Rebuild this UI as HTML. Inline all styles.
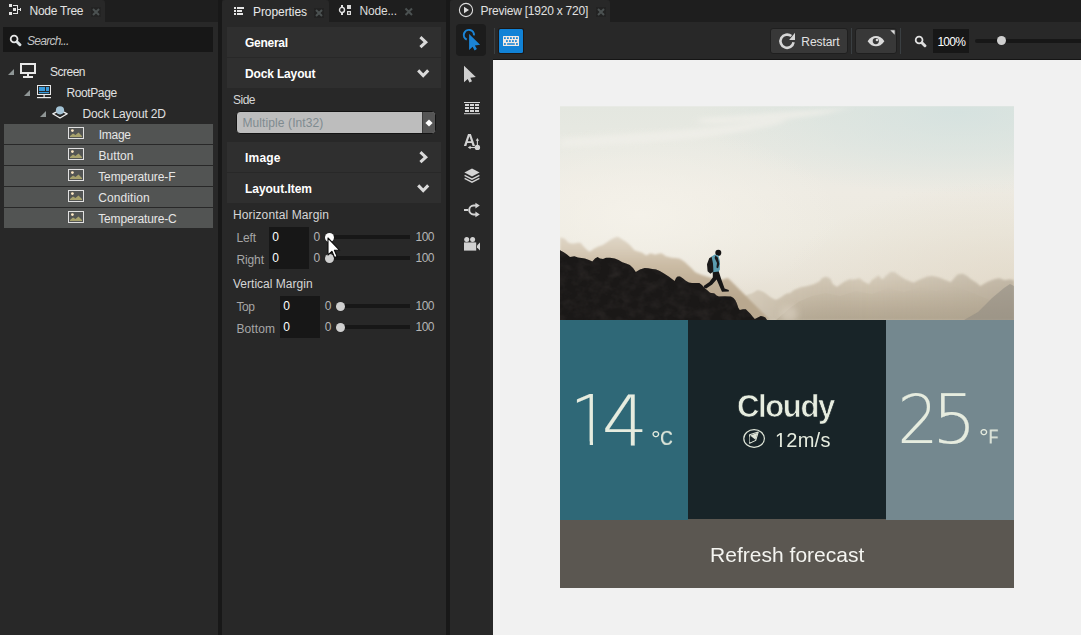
<!DOCTYPE html>
<html lang="en">
<head>
<meta charset="utf-8">
<title>Kanzi Studio - Dock Layout</title>
<style>
html,body{margin:0;padding:0;}
html{background:#282828;}
body{width:1081px;height:635px;overflow:hidden;background:#282828;font-family:"Liberation Sans",sans-serif;position:relative;}
.t{position:absolute;white-space:nowrap;margin:0;padding:0;font-weight:400;}
.g{display:inline-block;width:0;vertical-align:top;white-space:nowrap;}
section,header,nav,main,ul,li,div,h1,h3{margin:0;padding:0;}
ul{list-style:none;}
</style>
</head>
<body>
<div style="position:absolute;left:0px;top:0px;width:1081px;height:22px;background:#1e1e1e;"></div>
<div style="position:absolute;left:218px;top:0px;width:4px;height:635px;background:#181818;"></div>
<div style="position:absolute;left:446px;top:0px;width:4px;height:635px;background:#181818;"></div>
<section id="node-tree">
<div style="position:absolute;left:0px;top:0px;width:105px;height:22px;background:#282828;border-radius:0 3px 0 0;"></div>
<svg style="position:absolute;left:8px;top:3px;" width="14" height="13" viewBox="0 0 14 13"><g fill="#e4e4e4"><rect x="1" y="1" width="3" height="3"/><rect x="5" y="5" width="3" height="3"/><rect x="1" y="9" width="3" height="3"/><path d="M5 2h5v4h2V5h1v3h-1V7h-2v4H5v-1h4V3H5z"/></g></svg>
<span class="t" style="left:29.50px;top:3px;font-size:12px;line-height:16px;color:#e2e2e2;letter-spacing:-0.254px;">Node Tree</span>
<div style="position:absolute;left:91px;top:7px;width:10px;height:10px;background:#232323;"></div>
<svg style="position:absolute;left:91px;top:7px;" width="10" height="10" viewBox="0 0 10 10"><path d="M2 2l6 6M8 2l-6 6" stroke="#4b5151" stroke-width="2" fill="none"/></svg>
<div style="position:absolute;left:3px;top:27px;width:210px;height:25px;background:#171717;"></div>
<svg style="position:absolute;left:9px;top:34px;" width="13" height="13" viewBox="0 0 13 13"><circle cx="5.1" cy="5" r="3.4" fill="none" stroke="#e8e8e8" stroke-width="1.8"/><path d="M7.9 7.7l3 3" stroke="#dce2e4" stroke-width="3" stroke-linecap="round"/></svg>
<span class="t" style="left:27.00px;top:33px;font-size:12px;line-height:16px;color:#c4c4c4;letter-spacing:-0.716px;font-style:italic;">Search...</span>
<ul class="tree">
<li><svg style="position:absolute;left:8.2px;top:69px;" width="6" height="6" viewBox="0 0 6 6"><path d="M6 0v6H0z" fill="#8f9696"/></svg><svg style="position:absolute;left:20px;top:62.5px;" width="16" height="16" viewBox="0 0 16 16"><g fill="none" stroke="#e8e8e8"><rect x="1" y="1" width="14" height="9" stroke-width="2"/></g><rect x="7" y="11" width="2" height="2" fill="#e8e8e8"/><rect x="3" y="13" width="10" height="2" fill="#e8e8e8"/></svg><span class="t" style="left:50.00px;top:64px;font-size:12px;line-height:16px;color:#e0e0e0;letter-spacing:-0.505px;">Screen</span></li>
<li><svg style="position:absolute;left:24.2px;top:90px;" width="6" height="6" viewBox="0 0 6 6"><path d="M6 0v6H0z" fill="#8f9696"/></svg><svg style="position:absolute;left:37px;top:84.7px;" width="14" height="14" viewBox="0 0 14 14"><rect x="0.5" y="0.5" width="13" height="9" fill="none" stroke="#eaeaea" stroke-width="1"/><rect x="2" y="2" width="6" height="4" fill="#3a9bdc"/><rect x="9" y="2" width="3" height="4" fill="#3a9bdc"/><rect x="2" y="7" width="10" height="1.2" fill="#3a9bdc"/><rect x="6.5" y="10" width="1.2" height="2.2" fill="#eaeaea"/><rect x="0" y="12" width="14" height="1.2" fill="#eaeaea"/></svg><span class="t" style="left:66.50px;top:85px;font-size:12px;line-height:16px;color:#e0e0e0;letter-spacing:-0.396px;">RootPage</span></li>
<li><svg style="position:absolute;left:40.4px;top:111px;" width="6" height="6" viewBox="0 0 6 6"><path d="M6 0v6H0z" fill="#8f9696"/></svg><svg style="position:absolute;left:52px;top:106px;" width="16" height="13" viewBox="0 0 16 13"><path d="M0.8 7.8L8 4.2l7.2 3.6L8 12z" fill="none" stroke="#f0f0f0" stroke-width="1.3" stroke-linejoin="round"/><circle cx="8" cy="4.3" r="4.1" fill="#a3c3d6"/></svg><span class="t" style="left:82.50px;top:106px;font-size:12px;line-height:16px;color:#e0e0e0;letter-spacing:-0.144px;">Dock Layout 2D</span></li>
<li><div style="position:absolute;left:4px;top:124px;width:209px;height:20px;background:#525453;"></div><svg style="position:absolute;left:68px;top:127px;" width="16" height="12" viewBox="0 0 16 12"><rect x="0.5" y="0.5" width="15" height="11" fill="none" stroke="#e0e0e0" stroke-width="1"/><circle cx="4.4" cy="3.6" r="1.4" fill="#ffe9c4"/><path d="M2 10V9l3-2.5 2.5 1.5 3-2.6L14 9v1z" fill="#a7a16c"/></svg><span class="t" style="left:98.70px;top:127px;font-size:12px;line-height:16px;color:#e6e6e6;letter-spacing:-0.263px;">Image</span></li>
<li><div style="position:absolute;left:4px;top:145px;width:209px;height:20px;background:#525453;"></div><svg style="position:absolute;left:68px;top:148px;" width="16" height="12" viewBox="0 0 16 12"><rect x="0.5" y="0.5" width="15" height="11" fill="none" stroke="#e0e0e0" stroke-width="1"/><circle cx="4.4" cy="3.6" r="1.4" fill="#ffe9c4"/><path d="M2 10V9l3-2.5 2.5 1.5 3-2.6L14 9v1z" fill="#a7a16c"/></svg><span class="t" style="left:98.50px;top:148px;font-size:12px;line-height:16px;color:#e6e6e6;letter-spacing:0.061px;">Button</span></li>
<li><div style="position:absolute;left:4px;top:166px;width:209px;height:20px;background:#525453;"></div><svg style="position:absolute;left:68px;top:169px;" width="16" height="12" viewBox="0 0 16 12"><rect x="0.5" y="0.5" width="15" height="11" fill="none" stroke="#e0e0e0" stroke-width="1"/><circle cx="4.4" cy="3.6" r="1.4" fill="#ffe9c4"/><path d="M2 10V9l3-2.5 2.5 1.5 3-2.6L14 9v1z" fill="#a7a16c"/></svg><span class="t" style="left:98.20px;top:169px;font-size:12px;line-height:16px;color:#e6e6e6;letter-spacing:-0.116px;">Temperature-F</span></li>
<li><div style="position:absolute;left:4px;top:187px;width:209px;height:20px;background:#525453;"></div><svg style="position:absolute;left:68px;top:190px;" width="16" height="12" viewBox="0 0 16 12"><rect x="0.5" y="0.5" width="15" height="11" fill="none" stroke="#e0e0e0" stroke-width="1"/><circle cx="4.4" cy="3.6" r="1.4" fill="#ffe9c4"/><path d="M2 10V9l3-2.5 2.5 1.5 3-2.6L14 9v1z" fill="#a7a16c"/></svg><span class="t" style="left:98.20px;top:190px;font-size:12px;line-height:16px;color:#e6e6e6;letter-spacing:0.112px;">Condition</span></li>
<li><div style="position:absolute;left:4px;top:208px;width:209px;height:20px;background:#525453;"></div><svg style="position:absolute;left:68px;top:211px;" width="16" height="12" viewBox="0 0 16 12"><rect x="0.5" y="0.5" width="15" height="11" fill="none" stroke="#e0e0e0" stroke-width="1"/><circle cx="4.4" cy="3.6" r="1.4" fill="#ffe9c4"/><path d="M2 10V9l3-2.5 2.5 1.5 3-2.6L14 9v1z" fill="#a7a16c"/></svg><span class="t" style="left:98.20px;top:211px;font-size:12px;line-height:16px;color:#e6e6e6;letter-spacing:-0.119px;">Temperature-C</span></li>
</ul>
</section>
<section id="properties">
<div style="position:absolute;left:222px;top:0px;width:107px;height:22px;background:#282828;border-radius:3px 3px 0 0;"></div>
<svg style="position:absolute;left:234px;top:7px;" width="10" height="8" viewBox="0 0 10 8"><g fill="#e6e6e6"><rect x="0" y="0" width="2" height="2"/><rect x="3" y="0" width="7" height="2"/><rect x="0" y="3" width="2" height="2"/><rect x="3" y="3" width="5" height="2"/><rect x="0" y="6" width="2" height="2"/><rect x="3" y="6" width="6" height="2"/></g></svg>
<span class="t" style="left:253.00px;top:4px;font-size:12px;line-height:16px;color:#e8e8e8;letter-spacing:-0.077px;">Properties</span>
<div style="position:absolute;left:314px;top:8px;width:10px;height:10px;background:#222;"></div>
<svg style="position:absolute;left:314px;top:8px;" width="10" height="10" viewBox="0 0 10 10"><path d="M2 2l6 6M8 2l-6 6" stroke="#4b5151" stroke-width="2" fill="none"/></svg>
<svg style="position:absolute;left:338px;top:4px;" width="14" height="12" viewBox="0 0 14 12"><g fill="none" stroke="#e2e2e2"><circle cx="4" cy="5.9" r="2.5" stroke-width="1.4"/></g><rect x="3" y="1" width="2" height="2.4" fill="#e2e2e2"/><rect x="3" y="8.4" width="2" height="2.6" fill="#e2e2e2"/><rect x="9" y="1" width="4" height="4" fill="#d8d8d8"/><rect x="9.6" y="7.6" width="2.8" height="2.8" fill="none" stroke="#dedede" stroke-width="1.2"/></svg>
<span class="t" style="left:359.50px;top:3px;font-size:12px;line-height:16px;color:#dcdcdc;letter-spacing:-0.198px;">Node...</span>
<svg style="position:absolute;left:404px;top:7.4px;" width="10" height="10" viewBox="0 0 10 10"><path d="M1.5 1.5l6.5 6.5M8 1.5l-6.5 6.5" stroke="#4b5151" stroke-width="2.1" fill="none"/></svg>
<header><div style="position:absolute;left:227px;top:27px;width:214px;height:30px;background:#2f2f2f;"></div><h3 class="t" style="left:245.00px;top:35px;font-size:12px;line-height:16px;color:#ffffff;letter-spacing:-0.282px;font-weight:700;">General</h3><svg style="position:absolute;left:418.6px;top:36.2px;" width="9" height="13" viewBox="0 0 9 13"><path d="M1.4 1.2L6.8 6.2l-5.4 5" fill="none" stroke="#dadada" stroke-width="3"/></svg></header>
<header><div style="position:absolute;left:227px;top:58px;width:214px;height:30px;background:#2f2f2f;"></div><h3 class="t" style="left:245.00px;top:66px;font-size:12px;line-height:16px;color:#ffffff;letter-spacing:-0.151px;font-weight:700;">Dock Layout</h3><svg style="position:absolute;left:417px;top:68.6px;" width="13" height="9" viewBox="0 0 13 9"><path d="M1.2 1.4L6.2 6.6l5-5.2" fill="none" stroke="#dadada" stroke-width="3"/></svg></header>
<label class="t" style="left:233.00px;top:92px;font-size:12px;line-height:16px;color:#d6d6d6;letter-spacing:-0.506px;">Side</label>
<div style="position:absolute;left:236px;top:111px;width:200px;height:23px;background:#bdbdbd;border:1px solid #141414;border-radius:4px;box-sizing:border-box;overflow:hidden;"><div style="position:absolute;right:0;top:0;width:12px;height:21px;background:#555;border-left:1px solid #3c3c3c;"></div></div>
<svg style="position:absolute;left:424.2px;top:118.4px;" width="10" height="10" viewBox="0 0 10 10"><path d="M5 1.4L8.6 5 5 8.6 1.4 5z" fill="#fff"/></svg>
<span class="t" style="left:242.50px;top:115px;font-size:12px;line-height:16px;color:#7f8b90;letter-spacing:0.095px;">Multiple (Int32)</span>
<header><div style="position:absolute;left:227px;top:142px;width:214px;height:30px;background:#2f2f2f;"></div><h3 class="t" style="left:245.00px;top:150px;font-size:12px;line-height:16px;color:#ffffff;letter-spacing:0.205px;font-weight:700;">Image</h3><svg style="position:absolute;left:418.6px;top:151.2px;" width="9" height="13" viewBox="0 0 9 13"><path d="M1.4 1.2L6.8 6.2l-5.4 5" fill="none" stroke="#dadada" stroke-width="3"/></svg></header>
<header><div style="position:absolute;left:227px;top:173px;width:214px;height:30px;background:#2f2f2f;"></div><h3 class="t" style="left:245.00px;top:181px;font-size:12px;line-height:16px;color:#ffffff;letter-spacing:-0.034px;font-weight:700;">Layout.Item</h3><svg style="position:absolute;left:417px;top:183.6px;" width="13" height="9" viewBox="0 0 13 9"><path d="M1.2 1.4L6.2 6.6l5-5.2" fill="none" stroke="#dadada" stroke-width="3"/></svg></header>
<label class="t" style="left:233.00px;top:207px;font-size:12px;line-height:16px;color:#d6d6d6;letter-spacing:0.122px;">Horizontal Margin</label>
<div style="position:absolute;left:269px;top:227px;width:40px;height:42px;background:#171717;"></div>
<div class="prop"><label class="t" style="left:236.50px;top:230px;font-size:12px;line-height:16px;color:#a6a6a6;letter-spacing:-0.172px;">Left</label><span class="t" style="left:272.20px;top:229px;font-size:12px;line-height:16px;color:#ffffff;">0</span><span class="t" style="left:313.60px;top:229px;font-size:12px;line-height:16px;color:#b4b4b4;">0</span><div style="position:absolute;left:330px;top:235px;width:80px;height:4px;background:#171717;"></div><span class="t" style="left:415.60px;top:229px;font-size:12px;line-height:16px;color:#b4b4b4;letter-spacing:-0.611px;">100</span></div>
<div class="prop"><label class="t" style="left:236.50px;top:252px;font-size:12px;line-height:16px;color:#a6a6a6;letter-spacing:-0.129px;">Right</label><span class="t" style="left:272.20px;top:250px;font-size:12px;line-height:16px;color:#ffffff;">0</span><span class="t" style="left:313.60px;top:250px;font-size:12px;line-height:16px;color:#b4b4b4;">0</span><div style="position:absolute;left:330px;top:256px;width:80px;height:4px;background:#171717;"></div><span class="t" style="left:415.60px;top:250px;font-size:12px;line-height:16px;color:#b4b4b4;letter-spacing:-0.611px;">100</span></div>
<label class="t" style="left:233.00px;top:276px;font-size:12px;line-height:16px;color:#d6d6d6;letter-spacing:0.017px;">Vertical Margin</label>
<div style="position:absolute;left:280px;top:296px;width:40px;height:42px;background:#171717;"></div>
<div class="prop"><label class="t" style="left:236.50px;top:299px;font-size:12px;line-height:16px;color:#a6a6a6;letter-spacing:-0.424px;">Top</label><span class="t" style="left:283.20px;top:298px;font-size:12px;line-height:16px;color:#ffffff;">0</span><span class="t" style="left:324.70px;top:298px;font-size:12px;line-height:16px;color:#b4b4b4;">0</span><div style="position:absolute;left:341px;top:304px;width:69px;height:4px;background:#171717;"></div><span class="t" style="left:415.60px;top:298px;font-size:12px;line-height:16px;color:#b4b4b4;letter-spacing:-0.611px;">100</span></div>
<div class="prop"><label class="t" style="left:236.50px;top:321px;font-size:12px;line-height:16px;color:#a6a6a6;letter-spacing:0.097px;">Bottom</label><span class="t" style="left:283.20px;top:319px;font-size:12px;line-height:16px;color:#ffffff;">0</span><span class="t" style="left:324.70px;top:319px;font-size:12px;line-height:16px;color:#b4b4b4;">0</span><div style="position:absolute;left:341px;top:325px;width:69px;height:4px;background:#171717;"></div><span class="t" style="left:415.60px;top:319px;font-size:12px;line-height:16px;color:#b4b4b4;letter-spacing:-0.611px;">100</span></div>
<div style="position:absolute;left:324.8px;top:232.60000000000002px;width:9.4px;height:9.4px;background:#fcfcfc;border-radius:50%;"></div>
<div style="position:absolute;left:324.8px;top:253.7px;width:9.4px;height:9.4px;background:#cfcfcf;border-radius:50%;"></div>
<div style="position:absolute;left:335.8px;top:301.7px;width:9.4px;height:9.4px;background:#cfcfcf;border-radius:50%;"></div>
<div style="position:absolute;left:335.8px;top:322.7px;width:9.4px;height:9.4px;background:#cfcfcf;border-radius:50%;"></div>
</section>
<section id="preview">
<div style="position:absolute;left:450px;top:0px;width:160px;height:22px;background:#282828;border-radius:3px 3px 0 0;"></div>
<svg style="position:absolute;left:458px;top:2px;" width="16" height="16" viewBox="0 0 16 16"><circle cx="8" cy="8" r="6.6" fill="none" stroke="#dcdcdc" stroke-width="1.1"/><path d="M6 4.8L11 8l-5 3.2z" fill="#dcdcdc"/></svg>
<span class="t" style="left:480.50px;top:3px;font-size:12px;line-height:16px;color:#e0e0e0;letter-spacing:-0.225px;">Preview [1920 x 720]</span>
<div style="position:absolute;left:596px;top:7px;width:10px;height:10px;background:#222;"></div>
<svg style="position:absolute;left:596px;top:7px;" width="10" height="10" viewBox="0 0 10 10"><path d="M2 2l6 6M8 2l-6 6" stroke="#4b5151" stroke-width="2" fill="none"/></svg>
<div style="position:absolute;left:493px;top:59px;width:588px;height:576px;background:#f1f1f1;border-top:1px solid #151515;box-sizing:border-box;"></div>
<nav class="tools">
<div style="position:absolute;left:456px;top:24px;width:30px;height:32px;background:#1c1c1c;border-radius:4px;"></div>
<svg style="position:absolute;left:460px;top:28px;" width="22" height="24" viewBox="0 0 22 24"><path d="M13.98 7.44A5.1 5.1 0 1 0 6.74 11.62" fill="none" stroke="#1b84d6" stroke-width="2"/><path d="M9.1 6V22l3.5-3.2 2 3.6 2.3-1.3-2-3.5 5.2-.8z" fill="#1b84d6"/></svg>
<svg style="position:absolute;left:462px;top:64px;" width="16" height="20" viewBox="0 0 16 20"><path d="M2 1.7V18.2L5.7 15l1.8 3.4 2.5-1.2-1.7-3.5 5.5-.6z" fill="#cfcfcf"/></svg>
<svg style="position:absolute;left:464px;top:101px;" width="16" height="14" viewBox="0 0 16 14"><g fill="#d6d6d6"><rect x="0" y="1" width="16" height="1"/><rect x="0" y="12.2" width="16" height="1"/><rect x="1" y="3" width="4" height="2"/><rect x="6" y="3" width="4" height="2"/><rect x="11" y="3" width="4" height="2"/><rect x="1" y="6" width="4" height="2"/><rect x="6" y="6" width="4" height="2"/><rect x="11" y="6" width="4" height="2"/><rect x="1" y="9" width="4" height="2"/><rect x="6" y="9" width="4" height="2"/><rect x="11" y="9" width="4" height="2"/></g></svg>
<svg style="position:absolute;left:463px;top:132px;filter:grayscale(1);" width="19" height="20" viewBox="0 0 19 20"><text x="0.4" y="14.3" font-family="Liberation Sans, sans-serif" font-weight="700" font-size="16.5" fill="#d2d2d2">A</text><path d="M14.4 15.4V7.4" stroke="#d2d2d2" stroke-width="1.1"/><path d="M12.7 8.8l1.7-2.8 1.7 2.8z" fill="#d2d2d2"/><path d="M6.4 15.5h7" stroke="#d2d2d2" stroke-width="1.1"/><path d="M7.6 13.8l-2.8 1.7 2.8 1.7z" fill="#d2d2d2"/><circle cx="14.4" cy="15.4" r="2.7" fill="#d2d2d2"/></svg>
<svg style="position:absolute;left:464px;top:168px;" width="16" height="16" viewBox="0 0 16 16"><path d="M8 0.6L15.6 4.6 8 8.6 0.4 4.6z" fill="#d4d4d4"/><path d="M0.6 7.4L8 11.2l7.4-3.8M0.6 10.4L8 14.2l7.4-3.8" fill="none" stroke="#d4d4d4" stroke-width="1.3"/></svg>
<svg style="position:absolute;left:463px;top:202px;" width="18" height="16" viewBox="0 0 18 16"><g fill="none" stroke="#d4d4d4" stroke-width="2"><path d="M1 8h4"/><path d="M13 3.6H10.6A4.4 4.4 0 0 0 10.6 12.4H13"/></g><path d="M12.4 0.8l4.4 2.8-4.4 2.8zM12.4 9.6l4.4 2.8-4.4 2.8z" fill="#d4d4d4"/></svg>
<svg style="position:absolute;left:464px;top:236px;" width="17" height="16" viewBox="0 0 17 16"><g fill="#d2d2d2"><circle cx="2.7" cy="3.4" r="2.5"/><circle cx="8.6" cy="3.4" r="2.5"/><rect x="0" y="6.4" width="12.2" height="8.2"/><path d="M13 9.6l3-3v8l-3-3z"/></g></svg>
</nav>
<div style="position:absolute;left:494px;top:28px;width:1px;height:26px;background:#3a3f42;"></div>
<div style="position:absolute;left:499px;top:29px;width:24px;height:24px;background:#1182d6;border-radius:1.5px;box-shadow:0 0 0 1px #1c1816;"></div>
<svg style="position:absolute;left:503px;top:36px;" width="16" height="10" viewBox="0 0 16 10"><rect x="0" y="0" width="16" height="10" rx="0.6" fill="#f0e8e2"/><g fill="#1182d6"><rect x="1.0" y="1.25" width="1.8" height="1.7"/><rect x="4.0" y="1.25" width="1.8" height="1.7"/><rect x="7.0" y="1.25" width="1.8" height="1.7"/><rect x="10.0" y="1.25" width="1.8" height="1.7"/><rect x="13.0" y="1.25" width="1.8" height="1.7"/><rect x="3.0" y="4.2" width="1.8" height="1.7"/><rect x="6.0" y="4.2" width="1.8" height="1.7"/><rect x="9.0" y="4.2" width="1.8" height="1.7"/><rect x="12.0" y="4.2" width="1.8" height="1.7"/><rect x="1" y="7.15" width="1.8" height="1.7"/><rect x="4" y="7.15" width="7.9" height="1.7" rx="0.5"/><rect x="13" y="7.15" width="1.8" height="1.7"/></g></svg>
<div style="position:absolute;left:770px;top:28px;width:78px;height:26px;background:#383838;border:1px solid #1f1f1f;border-radius:3px;box-sizing:border-box;"></div>
<svg style="position:absolute;left:778px;top:32px;" width="18" height="18" viewBox="0 0 18 18"><path d="M15.6 10.35A6.6 6.6 0 1 1 13.3 4.1" fill="none" stroke="#d6d6d6" stroke-width="2.6"/><path d="M11.1 7.9H17V0.8z" fill="#d6d6d6"/></svg>
<span class="t" style="left:801.30px;top:34px;font-size:12px;line-height:16px;color:#e2e2e2;letter-spacing:-0.063px;">Restart</span>
<div style="position:absolute;left:851px;top:28px;width:1px;height:26px;background:#3a3f42;"></div>
<div style="position:absolute;left:855px;top:28px;width:42px;height:26px;background:#383838;border:1px solid #1f1f1f;border-radius:3px;box-sizing:border-box;"></div>
<svg style="position:absolute;left:867px;top:35px;" width="18" height="12" viewBox="0 0 18 12"><path d="M0.6 6.2C3 2.6 6 1.1 9 1.1S15 2.6 17.4 6.2C15 9.8 12 11.3 9 11.3S3 9.8 0.6 6.2z" fill="#dadada"/><circle cx="8.8" cy="6.1" r="3.1" fill="#383838"/><circle cx="10" cy="5" r="1.3" fill="#dadada"/></svg>
<svg style="position:absolute;left:889.6px;top:30.4px;" width="5" height="5" viewBox="0 0 5 5"><path d="M0.3 0.3h4.4v4.4z" fill="#dcdcdc"/></svg>
<div style="position:absolute;left:900px;top:28px;width:1px;height:26px;background:#3a3f42;"></div>
<svg style="position:absolute;left:914px;top:35px;" width="13" height="13" viewBox="0 0 13 13"><circle cx="5.1" cy="5" r="3.4" fill="none" stroke="#e2e2e2" stroke-width="1.8"/><path d="M7.9 7.7l3 3" stroke="#dcdcdc" stroke-width="3" stroke-linecap="round"/></svg>
<div style="position:absolute;left:933px;top:29px;width:36px;height:24px;background:#171717;"></div>
<span class="t" style="left:937.40px;top:34px;font-size:12px;line-height:16px;color:#ffffff;letter-spacing:-0.697px;">100%</span>
<div style="position:absolute;left:974.5px;top:39px;width:107px;height:4px;background:#171717;border-radius:2px 0 0 2px;"></div>
<div style="position:absolute;left:996.8px;top:36.099999999999994px;width:9.4px;height:9.4px;background:#cfcfcf;border-radius:50%;"></div>
<main class="card">
<svg style="position:absolute;left:560px;top:106px;display:block;" width="454" height="214" viewBox="560 106 454 214">
<defs>
<linearGradient id="sky" x1="0" y1="0" x2="0" y2="1">
<stop offset="0" stop-color="#e4e7e0"/><stop offset="0.2" stop-color="#e8e9e2"/><stop offset="0.4" stop-color="#eeebe3"/><stop offset="0.6" stop-color="#edeae0"/><stop offset="0.78" stop-color="#eae5da"/><stop offset="0.9" stop-color="#e6e0d3"/><stop offset="1" stop-color="#e1dacb"/>
</linearGradient>
<radialGradient id="blue" gradientUnits="userSpaceOnUse" cx="960" cy="112" r="260" gradientTransform="translate(0 112) scale(1 0.32) translate(0 -112)">
<stop offset="0" stop-color="#d3e1df" stop-opacity="0.85"/><stop offset="0.5" stop-color="#d6e2df" stop-opacity="0.5"/><stop offset="1" stop-color="#d8e3e0" stop-opacity="0"/>
</radialGradient>
<radialGradient id="glow" gradientUnits="userSpaceOnUse" cx="640" cy="215" r="200" gradientTransform="translate(0 215) scale(1 0.45) translate(0 -215)">
<stop offset="0" stop-color="#f5f2ea" stop-opacity="0.9"/><stop offset="1" stop-color="#f5f2ea" stop-opacity="0"/>
</radialGradient>
<filter id="puff" x="-1.5" y="-1.5" width="4" height="4"><feGaussianBlur stdDeviation="3"/></filter>
<filter id="wisp" x="-0.2" y="-1" width="1.4" height="3"><feGaussianBlur stdDeviation="5 2.2"/></filter>
<radialGradient id="warm" gradientUnits="userSpaceOnUse" cx="1014" cy="285" r="230" gradientTransform="translate(0 285) scale(1 0.45) translate(0 -285)">
<stop offset="0" stop-color="#dfd5c3" stop-opacity="0.6"/><stop offset="1" stop-color="#dfd5c3" stop-opacity="0"/>
</radialGradient>
<filter id="rough" x="0" y="0" width="1" height="1" color-interpolation-filters="sRGB">
<feTurbulence type="fractalNoise" baseFrequency="0.09 0.11" numOctaves="3" seed="7" result="n"/>
<feColorMatrix in="n" type="matrix" values="0 0 0 0 0.17  0 0 0 0 0.155  0 0 0 0 0.15  1.1 1.1 0 0 -0.92" result="c"/>
<feComposite in="c" in2="SourceGraphic" operator="in" result="t"/>
<feMerge><feMergeNode in="SourceGraphic"/><feMergeNode in="t"/></feMerge>
</filter>
<filter id="soft" x="-0.05" y="-0.2" width="1.1" height="1.4"><feGaussianBlur stdDeviation="0.8"/></filter>
<linearGradient id="farl" gradientUnits="userSpaceOnUse" x1="0" y1="236" x2="0" y2="300">
<stop offset="0" stop-color="#e0d7c8"/><stop offset="0.22" stop-color="#d7cbb8"/><stop offset="0.45" stop-color="#cbbca5"/><stop offset="0.7" stop-color="#c2b199"/><stop offset="1" stop-color="#b9a88f"/>
</linearGradient>
<linearGradient id="midg" gradientUnits="userSpaceOnUse" x1="0" y1="272" x2="0" y2="320">
<stop offset="0" stop-color="#d9d0c0"/><stop offset="0.3" stop-color="#cfc4b1"/><stop offset="0.65" stop-color="#c4b8a4"/><stop offset="1" stop-color="#baae9a"/>
</linearGradient>
<linearGradient id="midr" gradientUnits="userSpaceOnUse" x1="740" y1="0" x2="1014" y2="0">
<stop offset="0" stop-color="#dcd3c3" stop-opacity="0.75"/><stop offset="0.22" stop-color="#cfc5b4" stop-opacity="0.3"/><stop offset="0.45" stop-color="#a79d8c" stop-opacity="0"/><stop offset="1" stop-color="#a59b8b" stop-opacity="0.38"/>
</linearGradient>
<linearGradient id="haze" gradientUnits="userSpaceOnUse" x1="0" y1="285" x2="0" y2="320">
<stop offset="0" stop-color="#b3a690" stop-opacity="0"/><stop offset="1" stop-color="#a89c86" stop-opacity="0.45"/>
</linearGradient>
</defs>
<rect x="560" y="106.3" width="454" height="213.7" fill="url(#sky)"/>
<rect x="560" y="106.3" width="454" height="213.7" fill="url(#blue)"/>
<rect x="560" y="106.3" width="454" height="213.7" fill="url(#glow)"/>
<g filter="url(#wisp)" fill="#f0efe9" opacity="0.75"><path d="M560 138q60 -3 120 -8t110 -14l-10 8q-60 14 -120 18t-100 6z"/><path d="M700 118q80 -6 150 -10l-30 7q-60 8 -120 9z"/></g>
<rect x="560" y="106.3" width="454" height="213.7" fill="url(#warm)"/>
<polygon points="742.0,300.0 745.8,296.4 748.8,295.0 751.8,294.3 754.8,292.4 757.8,290.6 760.8,291.6 763.8,292.8 766.8,295.0 769.7,297.3 772.7,299.0 775.7,300.3 778.7,299.0 781.7,297.3 784.7,295.0 787.7,293.4 790.0,293.5 794.0,290.2 800.7,287.5 807.4,286.2 814.1,284.2 819.5,281.5 822.1,278.2 826.1,276.8 830.2,278.8 832.8,284.2 836.9,286.9 843.5,282.2 848.9,279.5 854.3,279.5 859.6,278.2 863.6,281.5 869.0,284.2 871.7,280.2 875.7,277.5 878.4,275.5 882.4,279.5 886.4,275.5 890.4,272.1 894.4,272.1 899.8,276.1 905.4,279.5 913.4,282.8 920.1,279.5 926.8,276.8 932.1,276.1 938.8,277.5 945.5,280.2 950.9,282.2 954.9,277.5 957.6,274.5 962.9,273.7 966.9,276.1 971.0,279.5 976.3,282.8 980.3,286.2 987.0,282.2 993.7,279.5 999.1,278.2 1004.4,280.2 1009.8,279.5 1014.0,280.2 1014.0,320.0 730.0,320.0" fill="url(#midg)" filter="url(#soft)"/>
<polygon points="742.0,300.0 745.8,296.4 748.8,295.0 751.8,294.3 754.8,292.4 757.8,290.6 760.8,291.6 763.8,292.8 766.8,295.0 769.7,297.3 772.7,299.0 775.7,300.3 778.7,299.0 781.7,297.3 784.7,295.0 787.7,293.4 790.0,293.5 794.0,290.2 800.7,287.5 807.4,286.2 814.1,284.2 819.5,281.5 822.1,278.2 826.1,276.8 830.2,278.8 832.8,284.2 836.9,286.9 843.5,282.2 848.9,279.5 854.3,279.5 859.6,278.2 863.6,281.5 869.0,284.2 871.7,280.2 875.7,277.5 878.4,275.5 882.4,279.5 886.4,275.5 890.4,272.1 894.4,272.1 899.8,276.1 905.4,279.5 913.4,282.8 920.1,279.5 926.8,276.8 932.1,276.1 938.8,277.5 945.5,280.2 950.9,282.2 954.9,277.5 957.6,274.5 962.9,273.7 966.9,276.1 971.0,279.5 976.3,282.8 980.3,286.2 987.0,282.2 993.7,279.5 999.1,278.2 1004.4,280.2 1009.8,279.5 1014.0,280.2 1014.0,320.0 730.0,320.0" fill="url(#midr)" filter="url(#soft)"/>
<polygon points="776,320 790,308 800,301 812,296 826,293 840,296 856,291 872,294 888,288 904,292 920,287 936,291 952,286 966,290 980,296 990,300 1000,292 1008,286 1014,283 1014,320" fill="url(#haze)"/>
<polygon points="964,320 978,312 992,298 1004,288 1010,284 1014,286 1014,320" fill="#8c8780" opacity="0.5"/>
<ellipse cx="789" cy="314" rx="9" ry="8" fill="#dbd2c2" opacity="0.6" filter="url(#puff)"/>
<polygon points="560.0,237.5 564.0,238.2 566.5,240.4 568.5,242.7 571.5,243.4 574.4,243.5 577.5,242.8 580.4,242.7 582.6,245.2 585.0,248.0 587.2,250.0 589.4,251.7 591.6,250.4 593.9,248.7 598.4,246.6 602.9,245.0 605.0,243.6 607.3,242.0 611.0,239.6 614.8,237.5 617.8,236.7 620.8,238.4 623.8,240.5 626.8,242.6 629.8,245.0 632.0,247.6 634.3,250.2 638.0,251.4 641.7,252.4 644.0,254.0 646.2,255.4 648.5,254.2 650.7,253.2 653.0,254.0 655.2,254.7 658.2,253.8 661.2,253.2 663.5,254.6 665.7,256.2 668.7,257.0 671.7,257.7 675.4,258.0 679.1,258.4 682.0,260.0 685.1,262.2 687.4,264.4 689.6,266.6 692.4,269.2 695.0,271.9 698.0,273.4 702.0,275.0 708.0,277.0 714.0,278.6 720.0,279.8 723.4,279.4 725.6,278.4 727.9,277.9 730.8,280.8 733.8,283.8 736.8,286.8 739.8,289.8 742.8,292.8 745.8,295.8 750.0,300.0 756.0,306.0 762.0,312.0 770.0,320.0 560.0,320.0" fill="url(#farl)" filter="url(#soft)"/>
<polygon points="560.0,250.2 564.0,252.4 567.0,254.5 570.0,257.0 574.4,256.2 578.0,257.6 585.0,258.4 589.0,260.0 592.4,261.4 595.0,258.6 597.6,257.0 600.0,258.6 603.0,259.0 606.0,257.7 610.0,257.8 614.8,258.4 618.5,260.0 622.3,262.2 626.0,263.4 629.8,265.1 633.0,268.0 635.8,271.9 640.0,269.4 644.7,268.1 648.5,268.2 652.2,268.9 656.0,269.6 659.7,271.1 664.0,273.4 668.7,276.4 672.0,279.0 674.7,280.9 676.0,278.0 677.6,276.4 680.0,276.4 683.0,278.4 686.0,280.9 689.0,282.4 692.0,283.1 696.0,283.0 699.4,283.1 702.0,285.0 704.0,287.6 707.0,290.0 710.0,292.8 714.4,293.6 716.5,295.4 718.9,296.6 725.0,296.2 730.9,296.6 733.5,298.0 735.3,300.3 737.0,304.0 738.3,307.8 739.8,310.0 743.0,309.2 745.8,309.3 748.0,311.4 750.3,313.8 752.5,316.4 754.8,319.0 757.8,317.5 760.8,316.0 763.0,316.4 765.3,317.5 766.7,319.5 767.0,320.0 560.0,320.0" fill="#1a1817" filter="url(#rough)"/>
<g class="hiker">
<ellipse cx="718.3" cy="252.8" rx="3" ry="3.1" fill="#151414"/>
<path d="M711.2 256.8l3.6-2.4 3.6 1.2 1.6 5.6-.2 8-1.6 4-5.4.4-1.8-8z" fill="#5b9db0"/>
<path d="M715.4 255.4l2.4 2.2 1.6 6.4-1.4 4.2-1.6-.6.6-4.6-2.4-5z" fill="#1a1a1b"/>
<path d="M709.2 258.2l2.4-1.4 1.4 6.8.4 8-3 2.2-2.8-2.6-.6-7z" fill="#1b1a1a"/>
<path d="M712.8 272.2l6-.6 2.4 7.4 3.4 9.6 4.2 1.4v1.6l-6.8.2-1.6-3.6-3.8-8.6-4.4 4.8-6 4.2-2.6-1 .4-1.8 5.4-3.8 3.4-4.6z" fill="#171616"/>
</g>
</svg>
<div class="btn" style="position:absolute;left:560px;top:519px;width:454px;height:68.5px;background:#5b5751;"></div>
<div class="tile" style="position:absolute;left:560px;top:320px;width:128px;height:200px;background:#2f6877;"></div>
<div class="tile" style="position:absolute;left:688px;top:320px;width:198px;height:199.4px;background:#182428;"></div>
<div class="tile" style="position:absolute;left:886px;top:320px;width:128px;height:200px;background:#74888f;"></div>
<span class="t" style="left:710.30px;top:542px;font-size:21px;line-height:25px;color:#f4f4f0;letter-spacing:0.022px;will-change:transform;">Refresh forecast</span>
<h1 class="t" style="left:737.20px;top:388px;font-size:31px;line-height:37px;color:#e6ecdf;letter-spacing:-1.370px;font-weight:700;-webkit-text-stroke:0.7px #182428;will-change:transform;">Cloudy</h1>
<svg style="position:absolute;left:742px;top:427px;" width="24" height="22" viewBox="0 0 24 22"><ellipse cx="12.1" cy="11.5" rx="10.3" ry="8.9" fill="none" stroke="#dfe5d8" stroke-width="1.2"/><path d="M7.6 16.2V7.8l8.6-2.8-2.4 8.2z" fill="none" stroke="#dfe5d8" stroke-width="1.1" stroke-linejoin="round"/><path d="M8.2 8.4l7.4-2.6-2.2 7z" fill="#dfe5d8"/><path d="M7.6 9.4v6.2l5.6-2.6z" fill="#182428"/></svg>
<span class="t" style="left:774.60px;top:428px;font-size:20px;line-height:24px;color:#e6ecdf;letter-spacing:0.234px;will-change:transform;"><span style="display:inline-block;clip-path:polygon(0 0,100% 0,100% 16.9px,6.9px 16.9px,6.9px 100%,4.9px 100%,4.9px 16.9px,0 16.9px);">1</span>2m/s</span>
<div class="temp temp-c" style="position:absolute;left:0;top:0;width:0;height:0;line-height:0;font-size:0;white-space:nowrap;"><span class="g big" style="font-family:'DejaVu Sans Light','DejaVu Sans','Liberation Sans',sans-serif;font-weight:200;font-size:69.0px;line-height:90px;color:#e6ecdf;-webkit-text-stroke:0.15px #e6ecdf;transform-origin:0 0;transform:translate(570.06px,375.93px) scaleX(0.9249);clip-path:polygon(0 0,43.90px 0,43.90px 65.56px,24.80px 65.56px,24.80px 90px,21.29px 90px,21.29px 65.56px,0 65.56px);">1</span><span class="g big" style="font-family:'DejaVu Sans Light','DejaVu Sans','Liberation Sans',sans-serif;font-weight:200;font-size:69.0px;line-height:90px;color:#e6ecdf;-webkit-text-stroke:0.15px #e6ecdf;transform-origin:0 0;transform:translate(601.83px,375.93px) scaleX(1.0525);">4</span><span class="g unit" style="font-size:23px;line-height:30px;color:#e6ecdf;transform-origin:0 0;transform:translate(650.95px,423.73px) scaleX(1.0549);will-change:transform;">°</span><span class="g unit" style="font-size:20.6px;line-height:30px;color:#e6ecdf;transform-origin:0 0;transform:translate(660.22px,422.86px) scaleX(0.8432);-webkit-text-stroke:0.2px #e6ecdf;will-change:transform;">C</span></div>
<div class="temp temp-f" style="position:absolute;left:0;top:0;width:0;height:0;line-height:0;font-size:0;white-space:nowrap;"><span class="g big" style="font-family:'DejaVu Sans Light','DejaVu Sans','Liberation Sans',sans-serif;font-weight:200;font-size:67.7px;line-height:90px;color:#e6ecdf;-webkit-text-stroke:0.15px #e6ecdf;transform-origin:0 0;transform:translate(897.51px,375.32px) scaleX(0.9511);">2</span><span class="g big" style="font-family:'DejaVu Sans Light','DejaVu Sans','Liberation Sans',sans-serif;font-weight:200;font-size:67.7px;line-height:90px;color:#e6ecdf;-webkit-text-stroke:0.15px #e6ecdf;transform-origin:0 0;transform:translate(932.32px,375.32px) scaleX(1.0273);">5</span><span class="g unit" style="font-size:23px;line-height:30px;color:#e6ecdf;transform-origin:0 0;transform:translate(978.95px,422.43px) scaleX(1.0549);will-change:transform;">°</span><span class="g unit" style="font-size:20.3px;line-height:30px;color:#e6ecdf;transform-origin:0 0;transform:translate(988.69px,421.47px) scaleX(0.7861);-webkit-text-stroke:0.2px #e6ecdf;will-change:transform;">F</span></div>
</main>
</section>
<svg style="position:absolute;left:327.4px;top:236.6px;" width="16" height="24" viewBox="0 0 16 24"><path d="M1 1v17l3.9-3.7 2.7 6.3 2.5-1.1-2.7-6.2h5.3z" fill="#fff" stroke="#0c0c0c" stroke-width="1.1" stroke-linejoin="round"/></svg>
</body>
</html>
